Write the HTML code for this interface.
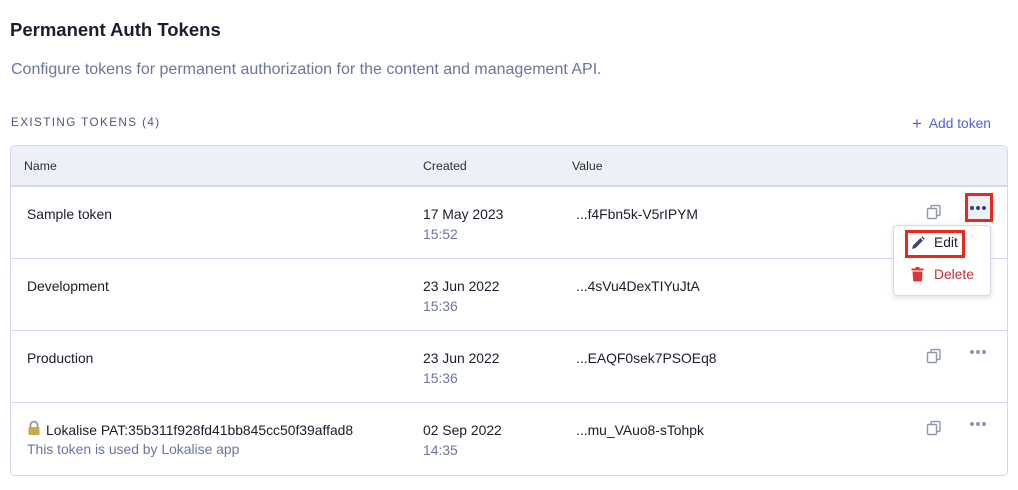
<!DOCTYPE html>
<html><head><style>
*{box-sizing:border-box;margin:0;padding:0}
body{width:1018px;height:490px;background:#fff;font-family:"Liberation Sans",sans-serif;color:#1c1d2b;position:relative;overflow:hidden}
.abs{position:absolute;white-space:nowrap}
.t{font-size:13.9px;color:#1c1d2b}
.s{font-size:13.9px;color:#6c74a3}
.tbl{position:absolute;left:10px;top:145px;width:998px;height:331px;border:1px solid #d5d8e8;border-radius:5px;overflow:hidden}
.hd{position:absolute;left:0;top:0;width:100%;height:41px;background:#eef0f8;border-bottom:2px solid #d5d8e8}
.row{position:absolute;left:0;width:100%;height:72px;border-bottom:1px solid #d5d8e8}
.dots{position:absolute;font-size:0}
.dots i{display:inline-block;width:4px;height:4px;border-radius:2px;background:#9096b8;margin-right:2px}
</style></head><body>
<div class="abs" style="left:10px;top:19px;font-size:18.5px;font-weight:bold;color:#1c1d2b">Permanent Auth Tokens</div>
<div class="abs" style="left:11px;top:61px;font-size:16px;color:#6c74a3">Configure tokens for permanent authorization for the content and management API.</div>
<div class="abs" style="left:11px;top:116px;font-size:11.7px;letter-spacing:1.4px;color:#4f567a">EXISTING TOKENS (4)</div>
<div class="abs" style="left:912px;top:113px;font-size:13.8px;color:#5a5fd6"><span style="font-size:17px;position:relative;top:1px">+</span>&nbsp; Add token</div>

<div class="tbl">
 <div class="hd">
  <div class="abs" style="left:13px;top:13px;font-size:12.3px;color:#2a2c3e">Name</div>
  <div class="abs" style="left:412px;top:13px;font-size:12.3px;color:#2a2c3e">Created</div>
  <div class="abs" style="left:561px;top:13px;font-size:12.3px;color:#2a2c3e">Value</div>
 </div>
 <div class="row" style="top:41px">
  <div class="abs t" style="left:16px;top:19px">Sample token</div>
  <div class="abs t" style="left:412px;top:19px">17 May 2023</div>
  <div class="abs s" style="left:412px;top:39px">15:52</div>
  <div class="abs t" style="left:565px;top:19px">...f4Fbn5k-V5rIPYM</div>
 </div>
 <div class="row" style="top:113px">
  <div class="abs t" style="left:16px;top:19px">Development</div>
  <div class="abs t" style="left:412px;top:19px">23 Jun 2022</div>
  <div class="abs s" style="left:412px;top:39px">15:36</div>
  <div class="abs t" style="left:565px;top:19px">...4sVu4DexTIYuJtA</div>
 </div>
 <div class="row" style="top:185px">
  <div class="abs t" style="left:16px;top:19px">Production</div>
  <div class="abs t" style="left:412px;top:19px">23 Jun 2022</div>
  <div class="abs s" style="left:412px;top:39px">15:36</div>
  <div class="abs t" style="left:565px;top:19px">...EAQF0sek7PSOEq8</div>
 </div>
 <div class="row" style="top:257px;border-bottom:none">
  <svg class="abs" style="left:16px;top:17px" width="14" height="16" viewBox="0 0 14 16"><path d="M3.5 7V5a3.5 3.5 0 0 1 7 0v2" fill="none" stroke="#9a9a9a" stroke-width="1.8"/><rect x="1.5" y="7" width="11" height="8" rx="1" fill="#c9a94e"/></svg>
  <div class="abs t" style="left:35px;top:19px">Lokalise PAT:35b311f928fd41bb845cc50f39affad8</div>
  <div class="abs s" style="left:16px;top:38px">This token is used by Lokalise app</div>
  <div class="abs t" style="left:412px;top:19px">02 Sep 2022</div>
  <div class="abs s" style="left:412px;top:39px">14:35</div>
  <div class="abs t" style="left:565px;top:19px">...mu_VAuo8-sTohpk</div>
 </div>
</div>

<svg class="abs" style="left:926px;top:204px" width="16" height="16" viewBox="0 0 16 16"><rect x="1.5" y="4.5" width="9" height="10" rx="1" fill="#fff" stroke="#9096b8" stroke-width="1.4"/><path d="M5 4.5V2.5a1 1 0 0 1 1-1h7a1 1 0 0 1 1 1v8a1 1 0 0 1-1 1h-2.5" fill="none" stroke="#9096b8" stroke-width="1.4"/></svg>
<svg class="abs" style="left:926px;top:348px" width="16" height="16" viewBox="0 0 16 16"><rect x="1.5" y="4.5" width="9" height="10" rx="1" fill="#fff" stroke="#9096b8" stroke-width="1.4"/><path d="M5 4.5V2.5a1 1 0 0 1 1-1h7a1 1 0 0 1 1 1v8a1 1 0 0 1-1 1h-2.5" fill="none" stroke="#9096b8" stroke-width="1.4"/></svg>
<svg class="abs" style="left:926px;top:420px" width="16" height="16" viewBox="0 0 16 16"><rect x="1.5" y="4.5" width="9" height="10" rx="1" fill="#fff" stroke="#9096b8" stroke-width="1.4"/><path d="M5 4.5V2.5a1 1 0 0 1 1-1h7a1 1 0 0 1 1 1v8a1 1 0 0 1-1 1h-2.5" fill="none" stroke="#9096b8" stroke-width="1.4"/></svg>

<div class="abs" style="left:965px;top:193px;width:28px;height:29px;background:#eef0f8;border:3px solid #e8291c"></div>
<div class="dots" style="left:970px;top:206px"><i style="background:#3d4270"></i><i style="background:#3d4270"></i><i style="background:#3d4270"></i></div>
<div class="dots" style="left:970px;top:350px"><i></i><i></i><i></i></div>
<div class="dots" style="left:970px;top:422px"><i></i><i></i><i></i></div>

<div class="abs" style="left:893px;top:225px;width:98px;height:71px;background:#fff;border:1px solid #d5d8e8;border-radius:4px;box-shadow:0 2px 6px rgba(40,45,80,.15)"></div>
<div class="abs" style="left:905px;top:230px;width:60px;height:28px;border:3px solid #e8291c"></div>
<svg class="abs" style="left:911px;top:236px" width="14" height="14" viewBox="0 0 14 14"><path d="M1 13l1-3.5 7.5-7.5 2.5 2.5-7.5 7.5z" fill="#3d4270"/><path d="M10.3 1.2l1-1 2.5 2.5-1 1z" fill="#3d4270"/></svg>
<div class="abs" style="left:934px;top:235px;font-size:13.8px;color:#1c1d2b">Edit</div>
<svg class="abs" style="left:911px;top:267px" width="13" height="15" viewBox="0 0 13 15"><rect x="0.5" y="1.5" width="12" height="2" fill="#e03434"/><rect x="4.5" y="0" width="4" height="2" fill="#e03434"/><path d="M1.5 4.5h10l-.8 10h-8.4z" fill="#e03434"/></svg>
<div class="abs" style="left:934px;top:267px;font-size:13.8px;color:#c4302b">Delete</div>
</body></html>
